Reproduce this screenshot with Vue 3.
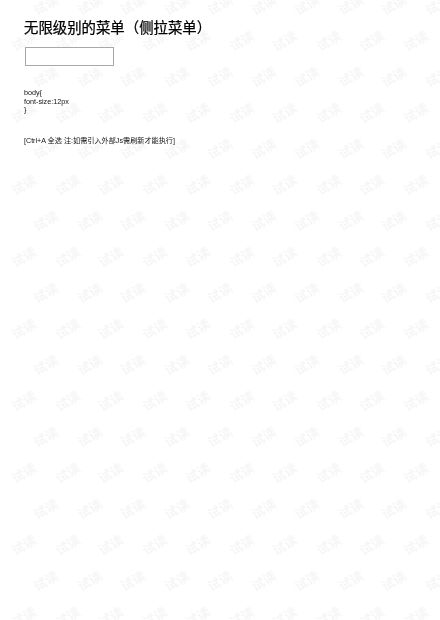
<script setup>
import { computed } from 'vue'

const rows = computed(() => {
  const list = []
  for (let i = 0; i < 18; i++) list.push({ id: i, shifted: i % 2 === 0 })
  return list
})
const cells = Array.from({ length: 11 }, (_, i) => i)
</script>

<template>
  <div class="page">
    <div class="watermark" aria-hidden="true">
      <div
        v-for="row in rows"
        :key="row.id"
        class="mark-row"
        :class="{ shifted: row.shifted }"
      >
        <span v-for="c in cells" :key="c" class="mark">试读</span>
      </div>
    </div>

    <h1 class="title">无限级别的菜单（侧拉菜单）</h1>
    <input class="code-box" type="text" />
    <div class="code">
      <div>body{</div>
      <div>font-size:12px</div>
      <div>}</div>
    </div>
    <p class="hint">[Ctrl+A 全选 注:如需引入外部Js需刷新才能执行]</p>
  </div>
</template>

<style>
html,
body {
  margin: 0;
  background: #fff;
}
</style>

<style scoped>
.page {
  position: relative;
  width: 440px;
  height: 620px;
  overflow: hidden;
  box-sizing: border-box;
  padding: 19px 24px 0;
  background: #fff;
  color: #111;
  font-family: "Liberation Sans", "Noto Sans CJK SC", sans-serif;
  filter: blur(0.3px);
}

.watermark {
  position: absolute;
  top: -13px;
  left: 0;
  width: 520px;
}

.mark-row {
  display: flex;
  height: 36.03px;
  align-items: center;
  padding-left: 2px;
}

.mark-row.shifted {
  padding-left: 24px;
}

.mark {
  flex: 0 0 43.5px;
  width: 43.5px;
  text-align: center;
  font-family: "Noto Sans CJK SC", sans-serif;
  font-size: 13px;
  font-weight: 700;
  line-height: 16px;
  color: #f6f6f6;
  white-space: nowrap;
  transform: rotate(-30deg);
}

.title {
  position: relative;
  margin: 0;
  font-family: "Liberation Sans", "Noto Sans CJK TC", sans-serif;
  font-size: 14.4px;
  font-weight: 400;
  line-height: 18px;
  color: #000;
  -webkit-text-stroke: 0.25px #000;
}

.code-box {
  position: relative;
  display: block;
  box-sizing: border-box;
  width: 89px;
  height: 19px;
  margin: 10px 0 0 1px;
  padding: 0;
  border: 1px solid #a8a8a8;
  background: #fff;
  outline: none;
}

.code {
  position: relative;
  margin-top: 23px;
  font-size: 7.2px;
  line-height: 8.6px;
}

.hint {
  position: relative;
  margin: 22px 0 0;
  font-size: 7.15px;
  line-height: 9px;
}
</style>
